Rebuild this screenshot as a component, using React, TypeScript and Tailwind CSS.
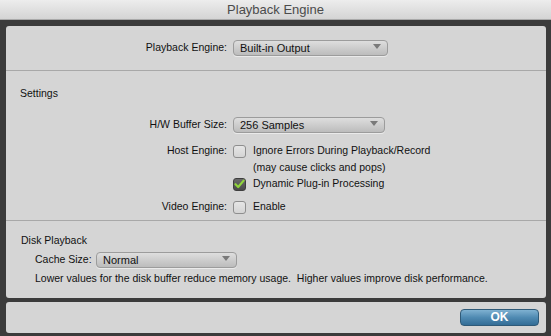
const font = { fontFamily: '"Liberation Sans", Arial, sans-serif' }

const Select = ({ value, width }: { value: string; width: string }) => (
    <div
        className={`relative h-[16px] ${width} rounded-[4px] border border-[#9c9c9c] bg-gradient-to-b from-[#dedede] to-[#bcbcbc] pl-[6px] text-[11px] leading-[14px] text-[#111] shadow-[0_1px_0_rgba(255,255,255,0.5)]`}
    >
        {value}
        <svg className="absolute right-[6px] top-[3px]" width="8" height="5" viewBox="0 0 8 5">
            <path d="M0 0 L8 0 L4 5 Z" fill="#7a7a7a" />
        </svg>
    </div>
)

const Checkbox = ({ checked = false }: { checked?: boolean }) =>
    checked ? (
        <div className="flex h-[13px] w-[13px] items-center justify-center rounded-[3px] border border-[#3e3e3e] bg-gradient-to-b from-[#6a6a6a] to-[#4a4a4a]">
            <svg width="11" height="10" viewBox="0 0 11 10">
                <path d="M1.5 5.2 L4.2 8 L9.6 1.6" stroke="#8fd43a" strokeWidth="2.2" fill="none" strokeLinecap="round" strokeLinejoin="round" />
            </svg>
        </div>
    ) : (
        <div className="h-[13px] w-[13px] rounded-[3px] border border-[#8e8e8e] bg-gradient-to-b from-[#e6e6e6] to-[#d4d4d4]" />
    )

export default function App() {
    return (
        <div className="flex h-[336px] w-[551px] flex-col bg-[#3b3b3b] text-[10.5px] text-[#111]" style={font}>
            <div className="flex h-[20px] items-center justify-center border-b border-[#a9a9a9] bg-gradient-to-b from-[#ededed] to-[#d4d4d4] text-[13px] text-[#4b4b4b]">
                Playback Engine
            </div>
            <div className="flex flex-1 flex-col gap-[4px] pl-[6px] pr-[5px] pt-[6px] pb-[3px]">
                <div className="flex h-[272px] flex-col rounded-[3px] bg-[#d5d5d5]">
                    <div className="flex h-[45px] items-center border-b border-[#a8a8a8]">
                        <span className="w-[227px] pr-[6px] text-right">Playback Engine:</span>
                        <Select value="Built-in Output" width="w-[155px]" />
                    </div>
                    <div className="flex h-[150px] flex-col border-b border-[#a8a8a8]">
                        <div className="mt-[15px] h-[14px] pl-[14px] leading-[14px]">Settings</div>
                        <div className="mt-[17px] flex items-center">
                            <span className="w-[227px] pr-[6px] text-right">H/W Buffer Size:</span>
                            <Select value="256 Samples" width="w-[152px]" />
                        </div>
                        <div className="mt-[11px] flex h-[14px] items-center">
                            <span className="w-[227px] pr-[6px] text-right">Host Engine:</span>
                            <Checkbox />
                            <span className="ml-[7px]">Ignore Errors During Playback/Record</span>
                        </div>
                        <div className="mt-[2px] h-[14px] pl-[247px] leading-[14px]">(may cause clicks and pops)</div>
                        <div className="mt-[3px] flex h-[14px] items-center pl-[227px]">
                            <Checkbox checked />
                            <span className="ml-[7px]">Dynamic Plug-in Processing</span>
                        </div>
                        <div className="mt-[9px] flex h-[14px] items-center">
                            <span className="w-[227px] pr-[6px] text-right">Video Engine:</span>
                            <Checkbox />
                            <span className="ml-[7px]">Enable</span>
                        </div>
                    </div>
                    <div className="flex flex-col">
                        <div className="mt-[12px] h-[14px] pl-[15px] leading-[14px]">Disk Playback</div>
                        <div className="mt-[5px] flex items-center pl-[29px]">
                            <span className="w-[61px]">Cache Size:</span>
                            <Select value="Normal" width="w-[141px]" />
                        </div>
                        <div className="mt-[3px] h-[14px] pl-[29px] leading-[14px]">
                            Lower values for the disk buffer reduce memory usage.&nbsp; Higher values improve disk performance.
                        </div>
                    </div>
                </div>
                <div className="flex flex-1 items-center justify-end rounded-[3px] bg-[#d5d5d5] pr-[7px]">
                    <button className="h-[17px] w-[79px] rounded-[4px] border border-[#2f5a78] bg-gradient-to-b from-[#7fb1d1] via-[#4f8ab2] to-[#346d96] text-[12px] font-bold leading-[15px] text-white">
                        OK
                    </button>
                </div>
            </div>
        </div>
    )
}
